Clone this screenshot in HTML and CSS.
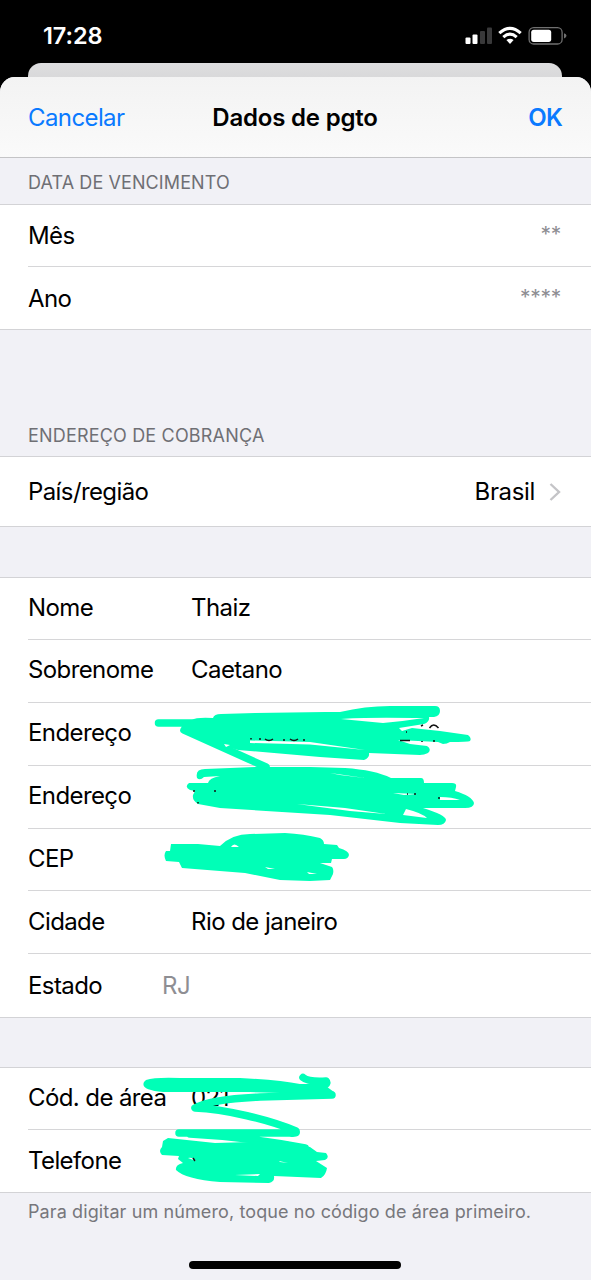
FILE: index.html
```html
<!DOCTYPE html>
<html lang="pt-BR">
<head>
<meta charset="utf-8">
<title>Dados de pgto</title>
<link rel="stylesheet" href="styles.css">
</head>
<body>
<div class="screen">
  <header class="status">
    <span class="time">17:28</span>
    <svg class="status-icons" width="104" height="22" viewBox="0 0 104 22">
      <g fill="#fff"><rect x="1.500" y="12.5" width="5" height="6.5" rx="1"/><rect x="8.500" y="9.5" width="5" height="9.5" rx="1"/></g>
      <g fill="#39393a"><rect x="16" y="6" width="5" height="13" rx="1"/><rect x="23" y="2.5" width="5" height="16.5" rx="1"/></g>
      <g fill="none" stroke="#fff" stroke-width="3.1"><path d="M35.3 8.1Q46 -1.5 56.7 8.1"/><path d="M39.3 12.1Q46 6.3 52.7 12.1"/></g>
      <path d="M42.4 15.1Q46 12.3 49.6 15.1L46 19Z" fill="#fff"/>
      <rect x="65.1" y="2.6" width="33" height="16.4" rx="4.6" fill="none" stroke="#707070" stroke-width="1.3"/>
      <rect x="67.2" y="4.7" width="20" height="12.2" rx="2.6" fill="#fff"/>
      <path d="M100 8.2Q102.500 9 102.500 10.8T100 13.4Z" fill="#707070"/>
    </svg>
  </header>
  <div class="sheet-behind"></div>
  <main class="sheet">
    <nav class="nav">
      <span class="cancel">Cancelar</span>
      <h1 class="title">Dados de pgto</h1>
      <span class="ok">OK</span>
    </nav>
    <h2 class="heading heading-first">DATA DE VENCIMENTO</h2>
    <section class="group">
      <div class="row"><span class="label">Mês</span><span class="stars">**</span></div>
      <div class="row"><span class="label">Ano</span><span class="stars">****</span></div>
    </section>
    <h2 class="heading heading-address">ENDEREÇO DE COBRANÇA</h2>
    <section class="group country">
      <div class="row"><span class="label">País/região</span><span class="country-value">Brasil</span>
        <svg class="chevron" width="12" height="20" viewBox="0 0 12 20"><path d="M1.5 2L10 10L1.5 18" fill="none" stroke="#c4c4c7" stroke-width="2.4"/></svg>
      </div>
    </section>
    <section class="group person">
      <div class="row"><span class="label">Nome</span><span class="value">Thaiz</span></div>
      <div class="row"><span class="label">Sobrenome</span><span class="value">Caetano</span></div>
      <div class="row"><span class="label">Endereço</span></div>
      <div class="row"><span class="label">Endereço</span></div>
      <div class="row"><span class="label">CEP</span></div>
      <div class="row"><span class="label">Cidade</span><span class="value">Rio de janeiro</span></div>
      <div class="row state"><span class="label">Estado</span><span class="value uf">RJ</span></div>
    </section>
    <section class="group phone">
      <div class="row"><span class="label">Cód. de área</span><span class="value">021</span></div>
      <div class="row"><span class="label">Telefone</span></div>
    </section>
    <p class="note">Para digitar um número, toque no código de área primeiro.</p>
    <div class="home"></div>
  </main>
  <svg class="marker" width="591" height="1280" viewBox="0 0 591 1280">
    <!-- first address line -->
    <path class="ink" d="M158.500 723H205M184 730L266 767"/>
    <path class="fill" d="M192 720Q196 717 213 718Q214 714 221 714L255 713L325 712H340Q365 706 390 706H435Q440 706 440 711Q440 716 434 717H429Q430 722 424 724L399 728L402 731L412 728L440 731L468 735Q472 738 470 741Q468 742 450 742Q447 744 443 744L438 742L398 740L410 744L427 746Q432 749 428 753Q424 755 420 755L369 753Q370 758 364 760L320 757L238 750L200 739L180 731Z"/>
    <path class="gap" d="M341 719Q360 717 424 718Q405 721 383 723ZM250 740.500L310 742L365 750L310 744.500L250 743ZM224 744L230 745L226 747Z"/>
    <path class="bits" d="M251 738v1.500M260 738v2M265 739q4 3 8 0M284 739v2M290 739q4 3 8 0M304 739v2M400 740.500h10M422 741v1M433 741h2M429.500 728q4-6 9 0M421 726l2-1M406 732h1"/>
    <!-- second address line -->
    <path class="fill" d="M197 778Q195 769 205 769L255 767H310L345 768Q375 770 391 778H421Q424 778 424 783H452Q457 783 456 787L455 791Q472 796 474 803Q474 808 465 808L423 808Q446 815 446 820Q445 825 438 825L400 823L330 815L220 808L198 804Q192 800 193 795L195 791L190 790Q184 787 189 783H208Q209 778 220 776L204 777Q200 781 197 778Z"/>
    <path class="gap" d="M297 804L345 808L386 814L350 811ZM406 809Q422 813 427 818L403 815ZM440 797Q452 797 460 800L440 800ZM330 773L365 778L340 775ZM393 793L417 794L404 795Z"/>
    <path class="bits" d="M194 790v2M215 790v2M198 802v1.500M407 794h1M414 794h2M439 797v2"/>
    <!-- postal code -->
    <path class="fill" d="M171 844H198L220 846Q232 834 250 834L285 833Q304 834 320 838Q324 840 324 844L337 845L339 848Q349 851 349 855Q348 859 344 859H332L331 863H320L332 867Q334 869 333 874L330 880L310 881L280 880L245 873L182 868L179 862L166 861Q163 855 166 851H170Z"/>
    <path class="gap" d="M231 847Q234 842 239 847ZM265 867L275 869L268 869ZM307 872L317 874L309 874Z"/>
    <!-- area code -->
    <path class="fill" d="M146 1080Q155 1077 180 1078H240Q280 1080 300 1084H323L334 1092L330 1096L280 1093L250 1092H163Q140 1090 144 1082Z"/>
    <path class="ink" d="M303 1077.500Q308 1082 326 1081Q330 1085 315 1088M332 1095L260 1097Q210 1099 195 1108C225 1109 270 1120 296 1131Q297 1134 290 1133H179M190 1134Q250 1137 305 1148"/>
    <!-- phone -->
    <path class="fill" d="M168 1138L215 1143L250 1142L285 1141L310 1147L317 1152L326 1153Q330 1158 325 1160L316 1161L327 1168Q326 1175 321 1178L274 1176Q275 1182 269 1183L220 1182Q185 1179 176 1170Q175 1165 183 1163L178 1159L179 1156L162 1155Q158 1151 162 1147L163 1141Z"/>
    <path class="gap" d="M188 1158Q193 1157 196 1161ZM235 1175L260 1174L258 1176ZM279 1161L288 1163L280 1162Z"/>
    <path class="bits" d="M193 1158l2 3"/>
  </svg>
</div>
</body>
</html>
```
FILE: styles.css
```css
* { box-sizing: border-box; }
body { margin: 0; background: #000; font-family: Inter, "Liberation Sans", sans-serif; }
.screen { position: relative; width: 591px; height: 1280px; display: flex; flex-direction: column; overflow: hidden; background: #000; }
.status { height: 63px; flex: none; display: flex; justify-content: space-between; padding: 22px 23px 0 43px; color: #fff; }
.status-icons { margin-top: 3px; }
.time { font-size: 23.500px; line-height: 28px; font-weight: 600; letter-spacing: -0.1px; }
.sheet-behind { height: 14px; flex: none; margin: 0 29px 0 28px; background: linear-gradient(#dedee0, #d9d9da); border-radius: 13px 13px 0 0; }
.sheet { flex: 1; display: flex; flex-direction: column; background: #f1f1f6; border-radius: 15px 15px 0 0; overflow: hidden; }
.nav { height: 81px; flex: none; display: grid; grid-template-columns: 1fr auto 1fr; align-items: center; padding: 0 29px 0 28px; background: linear-gradient(#f3f3f3, #fafafa); border-bottom: 1px solid #c4c4c6; font-size: 24px; letter-spacing: -0.6px; color: #0a7aff; }
.title { margin: 0; font-size: 24px; font-weight: 600; letter-spacing: -0.2px; color: #000; }
.ok { justify-self: end; font-weight: 600; letter-spacing: -0.8px; }
.heading { margin: 0; padding-left: 28px; flex: none; font-size: 18px; line-height: 24px; font-weight: 400; letter-spacing: 0.1px; color: #6f6f74; }
.heading-first { height: 46px; padding-top: 13px; }
.heading-address { height: 126px; padding-top: 94px; letter-spacing: 0.18px; }
.group { flex: none; background: #fff; border-top: 1px solid #d3d3d6; border-bottom: 1px solid #d3d3d6; padding-left: 28px; font-size: 24px; letter-spacing: -0.6px; color: #000; }
.row { height: 62px; display: flex; align-items: center; padding-right: 30px; border-bottom: 1px solid #d6d6d8; }
.row:last-child { height: 62px; border-bottom: 0; }
.label { width: 163px; white-space: nowrap; }
.stars { margin-left: auto; padding-bottom: 2px; font-size: 21px; letter-spacing: -0.3px; color: #8e8e93; }
.country .row { height: 69px; }
.country-value { margin-left: auto; letter-spacing: -0.35px; }
.chevron { margin-left: 14px; }
.person { margin-top: 50px; }
.person .row, .phone .row { height: 62.850px; padding-bottom: 2px; }
.person .row:first-child, .phone .row:first-child { height: 62px; }
.person .row:last-child { height: 62.500px; padding-bottom: 0; }
.phone .row:last-child { height: 62px; }
.person .value, .phone .value { letter-spacing: -0.55px; }
.state .label { width: 134px; }
.uf { color: #8e8e93; }
.phone { margin-top: 49.500px; }
.note { margin: 0; padding: 7px 28px 0; font-size: 18px; line-height: 24px; letter-spacing: 0.11px; color: #77777c; white-space: nowrap; }
.home { width: 212px; height: 8px; margin: auto auto 11px 189px; border-radius: 4px; background: #000; }
.marker { position: absolute; left: 0; top: 0; pointer-events: none; }
.ink { fill: none; stroke: #00ffb7; stroke-width: 7.500; stroke-linecap: round; stroke-linejoin: round; }
.fill { fill: #00ffb7; }
.gap { fill: #fff; }
.bits { fill: none; stroke: #111; stroke-width: 1.500; }
```
